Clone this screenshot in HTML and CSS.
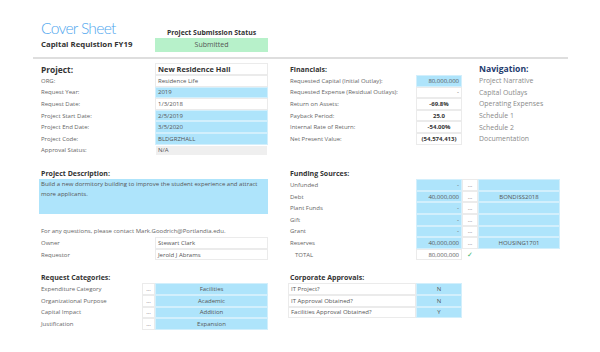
FILE: index.html
```html
<!DOCTYPE html>
<html lang="en">
<head>
    <meta charset="UTF-8">
    <title>Cover Sheet</title>
    <link rel="stylesheet" href="styles.css">
</head>
<body>
<div class="sheet">
    <!-- header -->
    <div class="head">
        <div class="head-title">
            <h1>Cover Sheet</h1>
            <div class="subtitle">Capital Requistion FY19</div>
        </div>
        <div class="head-status">
            <div class="status-label">Project Submission Status</div>
            <div class="status-box">Submitted</div>
        </div>
    </div>
    <div class="divider"></div>

    <!-- project / financials / navigation -->
    <div class="band">
        <div class="col-left">
            <div class="row row-head">
                <div class="big-label">Project:</div>
                <div class="cell cell-white strong">New Residence Hall</div>
            </div>
            <div class="row"><div class="label">ORG:</div><div class="cell cell-white">Residence Life</div></div>
            <div class="row"><div class="label">Request Year:</div><div class="cell cell-blue">2019</div></div>
            <div class="row"><div class="label">Request Date:</div><div class="cell cell-white">1/3/2018</div></div>
            <div class="row"><div class="label">Project Start Date:</div><div class="cell cell-blue">2/5/2019</div></div>
            <div class="row"><div class="label">Project End Date:</div><div class="cell cell-blue">3/5/2020</div></div>
            <div class="row"><div class="label">Project Code:</div><div class="cell cell-blue">BLDGRZHALL</div></div>
            <div class="row"><div class="label">Approval Status:</div><div class="cell cell-gray">N/A</div></div>
        </div>

        <div class="col-mid">
            <div class="row row-head"><div class="section-label">Financials:</div></div>
            <div class="row fin"><div class="label">Requested Capital (Initial Outlay):</div><div class="cell cell-blue num">80,000,000</div></div>
            <div class="row fin"><div class="label">Requested Expense (Residual Outlays):</div><div class="cell cell-white num">-</div></div>
            <div class="row fin"><div class="label">Return on Assets:</div><div class="cell cell-white center strong">-69.8%</div></div>
            <div class="row fin"><div class="label">Payback Period:</div><div class="cell cell-white center strong">25.0</div></div>
            <div class="row fin"><div class="label">Internal Rate of Return:</div><div class="cell cell-white center strong">-54.00%</div></div>
            <div class="row fin"><div class="label">Net Present Value:</div><div class="cell cell-white center strong">(54,574,413)</div></div>
        </div>

        <div class="col-nav">
            <div class="row row-head nav-head">Navigation:</div>
            <div class="row nav-item">Project Narrative</div>
            <div class="row nav-item">Capital Outlays</div>
            <div class="row nav-item">Operating Expenses</div>
            <div class="row nav-item">Schedule 1</div>
            <div class="row nav-item">Schedule 2</div>
            <div class="row nav-item">Documentation</div>
        </div>
    </div>

    <!-- description / funding -->
    <div class="band">
        <div class="col-left">
            <div class="row row-head"><div class="section-label">Project Description:</div></div>
            <div class="desc">Build a new dormitory building to improve the student experience and attract more applicants.</div>
            <div class="row"></div>
            <div class="row"><div class="label">For any questions, please contact Mark.Goodrich@Portlandia.edu.</div></div>
            <div class="row"><div class="label">Owner</div><div class="cell cell-white">Stewart Clark</div></div>
            <div class="row"><div class="label">Requestor</div><div class="cell cell-white">Jerold J Abrams</div></div>
        </div>

        <div class="col-wide">
            <div class="row row-head"><div class="section-label">Funding Sources:</div></div>
            <div class="row fund"><div class="label">Unfunded</div><div class="cell cell-blue num">-</div><div class="cell cell-white dots">...</div><div class="cell cell-blue center"></div></div>
            <div class="row fund"><div class="label">Debt</div><div class="cell cell-blue num">40,000,000</div><div class="cell cell-white dots">...</div><div class="cell cell-blue center">BONDISS2018</div></div>
            <div class="row fund"><div class="label">Plant Funds</div><div class="cell cell-blue num">-</div><div class="cell cell-white dots">...</div><div class="cell cell-blue center"></div></div>
            <div class="row fund"><div class="label">Gift</div><div class="cell cell-blue num">-</div><div class="cell cell-white dots">...</div><div class="cell cell-blue center"></div></div>
            <div class="row fund"><div class="label">Grant</div><div class="cell cell-blue num">-</div><div class="cell cell-white dots">...</div><div class="cell cell-blue center"></div></div>
            <div class="row fund"><div class="label">Reserves</div><div class="cell cell-blue num">40,000,000</div><div class="cell cell-white dots">...</div><div class="cell cell-blue center">HOUSING1701</div></div>
            <div class="row fund"><div class="label total">TOTAL</div><div class="cell cell-white num">80,000,000</div><div class="check">&#10003;</div></div>
        </div>
    </div>

    <!-- categories / approvals -->
    <div class="band">
        <div class="col-left">
            <div class="row row-head"><div class="section-label">Request Categories:</div></div>
            <div class="row cat"><div class="label">Expenditure Category</div><div class="cell cell-white dots">...</div><div class="cell cell-blue center">Facilities</div></div>
            <div class="row cat"><div class="label">Organizational Purpose</div><div class="cell cell-white dots">...</div><div class="cell cell-blue center">Academic</div></div>
            <div class="row cat"><div class="label">Capital Impact</div><div class="cell cell-white dots">...</div><div class="cell cell-blue center">Addition</div></div>
            <div class="row cat"><div class="label">Justification</div><div class="cell cell-white dots">...</div><div class="cell cell-blue center">Expansion</div></div>
        </div>

        <div class="col-mid">
            <div class="row row-head"><div class="section-label">Corporate Approvals:</div></div>
            <div class="row fin"><div class="cell cell-white">IT Project?</div><div class="cell cell-blue center">N</div></div>
            <div class="row fin"><div class="cell cell-white">IT Approval Obtained?</div><div class="cell cell-blue center">N</div></div>
            <div class="row fin"><div class="cell cell-white">Facilities Approval Obtained?</div><div class="cell cell-blue center">Y</div></div>
        </div>
    </div>
</div>
</body>
</html>
```

FILE: styles.css
```css
* {
    margin: 0;
    padding: 0;
    box-sizing: border-box;
}

body {
    margin: 10px;
    background: #fff;
    font-family: 'Open Sans', 'Noto Sans', sans-serif;
    color: #555;
}

.sheet {
    width: 580px;
    height: 332px;
    background: #fff;
    box-shadow: 0 1px 5px rgba(0, 0, 0, 0.28);
    padding: 7px 22px 0 29px;
}

/* header */
.head {
    display: flex;
}

.head-title {
    width: 116px;
    padding-left: 2px;
}

.head-title h1 {
    font-family: Lato, 'Open Sans', sans-serif;
    font-weight: 300;
    font-size: 15.6px;
    letter-spacing: -0.7px;
    line-height: 22px;
    color: #4ea6ee;
    white-space: nowrap;
}

.subtitle {
    font-size: 7.8px;
    font-weight: 700;
    color: #333;
    line-height: 10px;
    white-space: nowrap;
}

.head-status {
    width: 113px;
    padding-top: 10px;
}

.status-label {
    font-size: 6.9px;
    font-weight: 700;
    color: #333;
    text-align: center;
    line-height: 11px;
    white-space: nowrap;
}

.status-box {
    height: 14px;
    line-height: 14px;
    background: #b7f1ca;
    text-align: center;
    font-size: 7px;
    color: #555;
}

.divider {
    height: 2px;
    background: #dedede;
    margin: 5px 0 4px -6px;
}

/* bands */
.band {
    display: flex;
    margin-bottom: 11px;
}

.col-left {
    width: 229px;
    margin-right: 20px;
}

.col-mid {
    width: 174px;
}

.col-wide {
    width: 272px;
}

.col-nav {
    margin-left: 17px;
}

.row {
    display: flex;
    height: 11.6px;
    align-items: center;
    font-size: 6px;
    white-space: nowrap;
}

.row-head {
    height: 12px;
}

.label {
    width: 116px;
    padding-left: 2px;
    color: #666;
}

.fin .label,
.fund .label {
    width: 128px;
}

.cat .label {
    width: 103px;
}

.label.total {
    padding-left: 7px;
}

.big-label {
    width: 116px;
    padding-left: 2px;
    font-size: 8.4px;
    font-weight: 700;
    color: #333;
}

.section-label {
    padding-left: 2px;
    font-size: 7px;
    font-weight: 700;
    color: #333;
}

.cell {
    height: 100%;
    width: 113px;
    padding: 0 2px;
    display: flex;
    align-items: center;
    border: 1px solid #ebebeb;
    color: #555;
}

.cell-blue {
    background: #aee4fb;
    border-color: #d2effc;
}

.cell-gray {
    background: #efefef;
    border-color: #fff;
}

.strong {
    font-weight: 700;
    color: #333;
}

.row-head .cell.strong {
    font-size: 7.4px;
}

.num {
    justify-content: flex-end;
}

.center {
    justify-content: center;
}

.fin .cell,
.fund .cell {
    width: 46px;
}

.fin .cell:first-child {
    width: 128px;
}

.fund .dots {
    width: 16px;
}

.fund .cell:last-child {
    width: 82px;
}

.dots {
    justify-content: center;
    color: #666;
}

.cat .dots {
    width: 13px;
}

.check {
    width: 16px;
    text-align: center;
    color: #3db56b;
    font-size: 7px;
}

.desc {
    height: 34.8px;
    background: #aee4fb;
    font-size: 6px;
    color: #555;
    padding: 0 2px;
    line-height: 10px;
}

/* navigation */
.nav-head {
    font-size: 8.6px;
    font-weight: 700;
    color: #1f3b6e;
    align-items: flex-end;
}

.nav-item {
    font-size: 6.9px;
    color: #8a8a8a;
}
```
